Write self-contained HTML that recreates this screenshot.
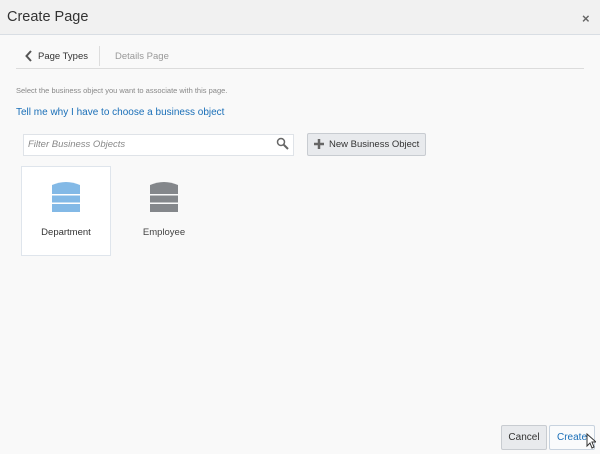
<!DOCTYPE html>
<html><head><style>
body{margin:0;width:600px;height:454px;background:#f9f9f9;font-family:"Liberation Sans",sans-serif;position:relative;overflow:hidden}
.a{position:absolute}
.hdr{left:0;top:0;width:600px;height:34px;background:#f1f1f1;border-bottom:1px solid #d9dee4}
</style></head><body>
<div class="a hdr"></div>
<div class="a" style="left:7px;top:9px;font-size:14.5px;color:#333">Create Page</div>
<div class="a" style="left:582px;top:11px;font-size:13px;color:#666;font-weight:bold">×</div>
<svg class="a" style="left:25px;top:50px" width="8" height="12"><path d="M6 1 L1.5 6 L6 11" stroke="#555" stroke-width="2" fill="none"/></svg>
<div class="a" style="left:38px;top:51px;font-size:9.5px;color:#333">Page Types</div>
<div class="a" style="left:99px;top:46px;width:1px;height:20px;background:#ddd"></div>
<div class="a" style="left:115px;top:51px;font-size:9.5px;color:#999">Details Page</div>
<div class="a" style="left:16px;top:68px;width:568px;height:1px;background:#dcdcdc"></div>
<div class="a" style="left:16px;top:86px;font-size:7.5px;color:#888">Select the business object you want to associate with this page.</div>
<div class="a" style="left:16px;top:107px;font-size:10px;color:#1a6fb8">Tell me why I have to choose a business object</div>
<div class="a" style="left:23px;top:134px;width:269px;height:20px;background:#fff;border:1px solid #dfe3e8"></div>
<div class="a" style="left:28px;top:139px;font-size:9.5px;color:#888;font-style:italic">Filter Business Objects</div>
<svg class="a" style="left:276px;top:137px" width="13" height="13"><circle cx="5" cy="5" r="3.5" stroke="#666" stroke-width="1.5" fill="none"/><path d="M7.5 7.5 L12 12" stroke="#666" stroke-width="2"/></svg>
<div class="a" style="left:307px;top:133px;width:117px;height:21px;background:#e8eaed;border:1px solid #c8ccd1;border-radius:2px"></div>
<svg class="a" style="left:313px;top:138px" width="12" height="12"><path d="M6 1V11M1 6H11" stroke="#666" stroke-width="2.5"/></svg>
<div class="a" style="left:329px;top:139px;font-size:9.5px;color:#333">New Business Object</div>
<div class="a" style="left:21px;top:166px;width:88px;height:88px;background:#fff;border:1px solid #dfe5ec"></div>
<svg class="a" style="left:52px;top:181px" width="28" height="32"><path d="M0 4 Q14 -2 28 4 V13 H0Z" fill="#83b9e6"/><rect y="14.5" width="28" height="7" fill="#83b9e6"/><rect y="23" width="28" height="8" fill="#83b9e6"/></svg>
<svg class="a" style="left:150px;top:181px" width="28" height="32"><path d="M0 4 Q14 -2 28 4 V13 H0Z" fill="#84878b"/><rect y="14.5" width="28" height="7" fill="#84878b"/><rect y="23" width="28" height="8" fill="#84878b"/></svg>
<div class="a" style="left:21px;top:227px;width:90px;text-align:center;font-size:9.5px;color:#333">Department</div>
<div class="a" style="left:119px;top:227px;width:90px;text-align:center;font-size:9.5px;color:#444">Employee</div>
<div class="a" style="left:501px;top:425px;width:44px;height:23px;background:#e8eaed;border:1px solid #c8ccd1;border-radius:2px;font-size:10px;color:#333;text-align:center;line-height:23px">Cancel</div>
<div class="a" style="left:549px;top:425px;width:44px;height:23px;background:#fafbfc;border:1px solid #c8d3df;border-radius:2px;font-size:10px;color:#1a6fb8;text-align:center;line-height:23px">Create</div>
<svg class="a" style="left:586px;top:433px" width="10" height="16"><path d="M1 1 V13 L4 10 L6 15 L8 14 L6 9 H10Z" fill="#fff" stroke="#333" stroke-width="1"/></svg>
</body></html>
